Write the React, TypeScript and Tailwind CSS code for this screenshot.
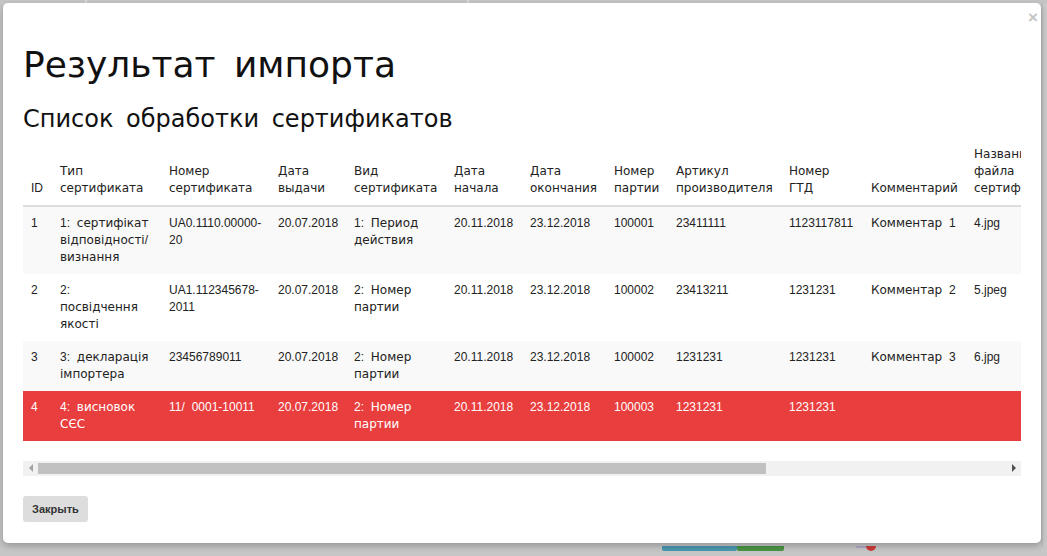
import React from 'react';

const LAT = '"Liberation Sans", Arial, sans-serif';

// Кириллица рисуется DejaVu, латиница и цифры — Liberation Sans
const Mixed: React.FC<{ text: string }> = ({ text }) => {
  const parts = text.split(/([A-Za-z0-9.\-\/_:]+)/);
  return (
    <>
      {parts.map((p, i) =>
        i % 2 === 1 ? (
          <span key={i} style={{ fontFamily: LAT }}>
            {p}
          </span>
        ) : (
          <React.Fragment key={i}>{p}</React.Fragment>
        )
      )}
    </>
  );
};

const columns = [
  { title: 'ID', w: 'w-[29px]' },
  { title: 'Тип сертификата', w: 'w-[109px]' },
  { title: 'Номер сертификата', w: 'w-[109px]' },
  { title: 'Дата выдачи', w: 'w-[76px]' },
  { title: 'Вид сертификата', w: 'w-[100px]' },
  { title: 'Дата начала', w: 'w-[76px]' },
  { title: 'Дата окончания', w: 'w-[84px]' },
  { title: 'Номер партии', w: 'w-[62px]' },
  { title: 'Артикул производителя', w: 'w-[113px]' },
  { title: 'Номер ГТД', w: 'w-[82px]' },
  { title: 'Комментарий', w: 'w-[103px]' },
  { title: 'Название файла сертификата', w: 'w-[100px]' },
  { title: 'Статус', w: 'w-[110px]' },
  { title: 'Ошибка', w: 'w-[200px]' },
];

type Row = { cells: string[]; error?: boolean };

const rows: Row[] = [
  {
    cells: ['1', '1: сертифікат відповідності/ визнання', 'UA0.1110.00000-20', '20.07.2018', '1: Период действия', '20.11.2018', '23.12.2018', '100001', '23411111', '1123117811', 'Комментар 1', '4.jpg', '', ''],
  },
  {
    cells: ['2', '2: посвідчення якості', 'UA1.112345678-2011', '20.07.2018', '2: Номер партии', '20.11.2018', '23.12.2018', '100002', '23413211', '1231231', 'Комментар 2', '5.jpeg', '', ''],
  },
  {
    cells: ['3', '3: декларація імпортера', '23456789011', '20.07.2018', '2: Номер партии', '20.11.2018', '23.12.2018', '100002', '1231231', '1231231', 'Комментар 3', '6.jpg', '', ''],
  },
  {
    cells: ['4', '4: висновок СЄС', '11/ 0001-10011', '20.07.2018', '2: Номер партии', '20.11.2018', '23.12.2018', '100003', '1231231', '1231231', '', '', '', ''],
    error: true,
  },
];

const App: React.FC = () => {
  return (
    <div className="w-[1047px] h-[556px] overflow-hidden bg-[#c9c9c9] flex flex-col font-['DejaVu_Sans',sans-serif]">
      <div className="h-[3px] flex shrink-0">
        <div className="w-[85px] bg-[#c4c4c4]" />
        <div className="w-[2px] bg-[#d8d8d8]" />
        <div className="w-[380px] bg-[#c4c4c4]" />
        <div className="w-[2px] bg-[#d8d8d8]" />
        <div className="flex-1 bg-[#c4c4c4]" />
      </div>
      <div className="flex flex-1">
        <div className="w-[3px] bg-[#c4c4c4]" />
        <div className="relative w-[1038px] h-[540px] bg-white rounded-[5px] px-5 pt-5 text-[#222] shadow-[0_3px_6px_rgba(0,0,0,0.25)]">
          <button className="absolute right-[3px] top-[6px] text-[17px] leading-none font-bold text-[#c4c4c4] font-['Liberation_Sans',sans-serif]">
            ×
          </button>
          <h1 className="mt-[22px] text-[36px] leading-[1.1] font-normal text-[#111] [word-spacing:7px]">
            Результат импорта
          </h1>
          <h3 className="mt-[21px] text-[24px] leading-[1.1] font-normal text-[#111] [word-spacing:5px]">
            Список обработки сертификатов
          </h3>
          <div className="mt-[6px] w-[998px] overflow-hidden">
            <table className="table-fixed border-collapse w-[1333px] text-[12px] leading-[17px] [word-spacing:3px]">
              <thead>
                <tr className="border-b-2 border-[#dddddd]">
                  {columns.map((c) => (
                    <th key={c.title} className={`${c.w} px-2 py-2 text-left align-bottom font-normal`}>
                      <Mixed text={c.title} />
                    </th>
                  ))}
                </tr>
              </thead>
              <tbody>
                {rows.map((r, i) => (
                  <tr
                    key={i}
                    className={
                      r.error
                        ? 'bg-[#e93e3e] text-white'
                        : i % 2 === 0
                        ? 'bg-[#f9f9f9]'
                        : 'bg-white'
                    }
                  >
                    {r.cells.map((v, j) => (
                      <td key={j} className="px-2 py-2 align-top">
                        <Mixed text={v} />
                      </td>
                    ))}
                  </tr>
                ))}
              </tbody>
            </table>
            <div className="mt-[20px] h-[15px] bg-[#f1f1f1] flex items-center">
              <div className="w-[15px] flex justify-center">
                <div className="w-0 h-0 border-y-[4px] border-y-transparent border-r-[4px] border-r-[#a3a3a3]" />
              </div>
              <div className="w-[728px] h-[11px] bg-[#c1c1c1]" />
              <div className="flex-1" />
              <div className="w-[15px] flex justify-center">
                <div className="w-0 h-0 border-y-[4px] border-y-transparent border-l-[4px] border-l-[#505050]" />
              </div>
            </div>
          </div>
          <div className="mt-[20px]">
            <button className="h-[26px] px-[9px] rounded-[3px] bg-[#dddddd] text-[11px] font-bold text-[#333] font-['Liberation_Sans',sans-serif]">
              Закрыть
            </button>
          </div>
        </div>
        <div className="flex-1 bg-[#c9c9c9] border-l-[2px] border-[#bdbdbd]" />
      </div>
      <div className="h-[10px] shrink-0 flex bg-[#c6c6c6]">
        <div className="w-[662px]" />
        <div className="w-[75px] h-[5px] bg-[#4a97b0] rounded-b-[2px]" />
        <div className="w-[47px] h-[5px] bg-[#4a9444] rounded-b-[2px]" />
        <div className="w-[72px]" />
        <div className="w-[10px] h-[2px] bg-[#b2a6c6]" />
        <div className="w-[10px] h-[5px] bg-[#cc3a3a] rounded-b-full" />
      </div>
    </div>
  );
};

export default App;
